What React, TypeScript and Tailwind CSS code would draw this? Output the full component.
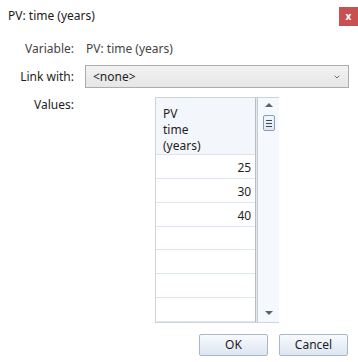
import { ChevronDown } from 'lucide-react';

const values = ['25', '30', '40', '', '', '', ''];

export default function App() {
  return (
    <div className="relative w-[358px] h-[362px] bg-white text-[12px] text-[#1e1e1e] font-['Noto_Sans','Open_Sans',sans-serif] leading-none">
      {/* title bar */}
      <div className="h-[30px] flex items-center pl-[8px] pt-[1px] text-[#1a1a1a]">PV: time (years)</div>
      <button className="absolute top-[7px] right-0 w-[19px] h-[19px] bg-[#c75050] flex items-center justify-center text-white text-[10px] font-bold leading-none pb-[2px]">
        x
      </button>

      {/* form */}
      <div className="mt-[9px] flex items-center h-[20px]">
        <div className="w-[74px] text-right text-[#444]">Variable:</div>
        <div className="ml-[12px] text-[#444]">PV: time (years)</div>
      </div>

      <div className="mt-[6px] flex items-center h-[23px]">
        <div className="w-[74px] text-right text-[#1e1e1e]">Link with:</div>
        <div className="ml-[11px] w-[264px] h-[23px] border border-[#acacac] bg-linear-to-b from-[#f2f2f2] to-[#e6e6e6] flex items-center justify-between pl-[7px] pr-[6px]">
          <span>&lt;none&gt;</span>
          <ChevronDown className="w-[8px] h-[8px] text-[#555] mr-[1px]" strokeWidth={2.5} />
        </div>
      </div>

      <div className="mt-[9px] flex">
        <div className="w-[74px] text-right pt-[2px]">Values:</div>
        <div className="ml-[81px] w-[124px] h-[226px] border-l border-t border-b border-[#cfd4dc] flex">
          {/* column */}
          <div className="w-[100px] flex flex-col">
            <div className="h-[58px] bg-[#f3f6fb] border-b border-[#dde3ec] pl-[7px] pt-[8px] leading-[16px]">
              <div>PV</div>
              <div>time</div>
              <div>(years)</div>
            </div>
            {values.map((v, i) => (
              <div key={i} className="h-[25px] border-b border-[#dce6f4] flex items-center justify-end pr-[4px] pt-[3px]">
                {v}
              </div>
            ))}
          </div>
          {/* separator */}
          <div className="w-[3px] flex">
            <div className="w-[1px] bg-[#b9bec6]" />
            <div className="w-[1px] bg-[#e3e6ea]" />
            <div className="w-[1px] bg-[#c8ccd3]" />
          </div>
          {/* scrollbar */}
          <div className="w-[21px] bg-[#f5f8fc] flex flex-col items-center">
            <div className="mt-[5px] w-0 h-0 border-l-[4px] border-r-[4px] border-b-[4px] border-l-transparent border-r-transparent border-b-[#5a6270]" />
            <div className="mt-[8px] w-[12px] h-[16px] border border-[#8a9bb3] rounded-[2px] bg-linear-to-b from-[#f3f7fc] to-[#dfe8f3] flex flex-col items-center justify-center gap-[2px]">
              <div className="w-[6px] h-[1px] bg-[#3c4654]" />
              <div className="w-[6px] h-[1px] bg-[#3c4654]" />
              <div className="w-[6px] h-[1px] bg-[#3c4654]" />
            </div>
            <div className="flex-1" />
            <div className="mb-[7px] w-0 h-0 border-l-[4px] border-r-[4px] border-t-[4px] border-l-transparent border-r-transparent border-t-[#5a6270]" />
          </div>
        </div>
      </div>

      {/* buttons */}
      <div className="mt-[11px] flex justify-end gap-[11px] pr-[10px]">
        <button className="w-[69px] h-[22px] border border-[#a9b7c9] rounded-[2px] bg-linear-to-b from-[#f7fafd] to-[#dde6f1] text-[#1e1e1e]">OK</button>
        <button className="w-[69px] h-[22px] border border-[#a9b7c9] rounded-[2px] bg-linear-to-b from-[#f7fafd] to-[#dde6f1] text-[#1e1e1e]">Cancel</button>
      </div>
    </div>
  );
}
